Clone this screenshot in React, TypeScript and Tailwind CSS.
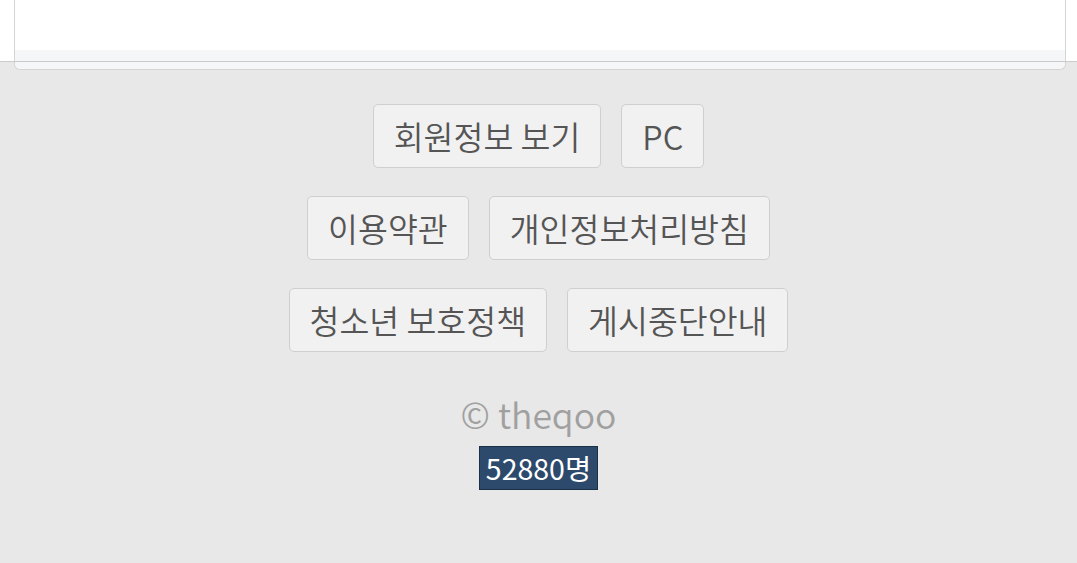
import React from "react";

const rows: string[][] = [
  ["회원정보 보기", "PC"],
  ["이용약관", "개인정보처리방침"],
  ["청소년 보호정책", "게시중단안내"],
];

export default function App() {
  return (
    <div
      className="relative min-h-screen bg-[#e8e8e8]"
      style={{ fontFamily: '"Noto Sans CJK KR", "Noto Sans", sans-serif' }}
    >
      {/* top content card (cut off) */}
      <div className="h-[62px] bg-white pl-[14px] pr-[11px]">
        <div className="flex h-[70px] flex-col rounded-b-[6px] border-x border-b border-[#d4d4d4] bg-white">
          <div className="flex-1" />
          <div className="h-[19px] rounded-b-[6px] bg-[#f5f6f8]" />
        </div>
      </div>
      {/* divider line over the card */}
      <div className="absolute left-0 right-0 top-[61px] h-px bg-[#cbcbcb]" />

      <footer className="flex flex-col items-center pt-[42px]">
        <div className="flex flex-col items-center gap-[28px]">
          {rows.map((row, i) => (
            <div key={i} className="flex gap-[20px]">
              {row.map((label) => (
                <a
                  key={label}
                  className="flex h-[64px] items-center rounded-[5px] border border-[#cfcfcf] bg-[#f1f1f1] px-[20px] text-[32.5px] font-[350] leading-none text-[#555555]"
                >
                  {label}
                </a>
              ))}
            </div>
          ))}
        </div>

        <div className="mt-[38px] text-[35.5px] font-[350] leading-[48px] text-[#a0a0a0]">© theqoo</div>
        <div className="mt-[8px] flex h-[44px] items-center border border-[#1b2f47] bg-[#2d4a6c] px-[6px] text-[28.5px] leading-none text-white">
          52880명
        </div>
      </footer>
    </div>
  );
}
